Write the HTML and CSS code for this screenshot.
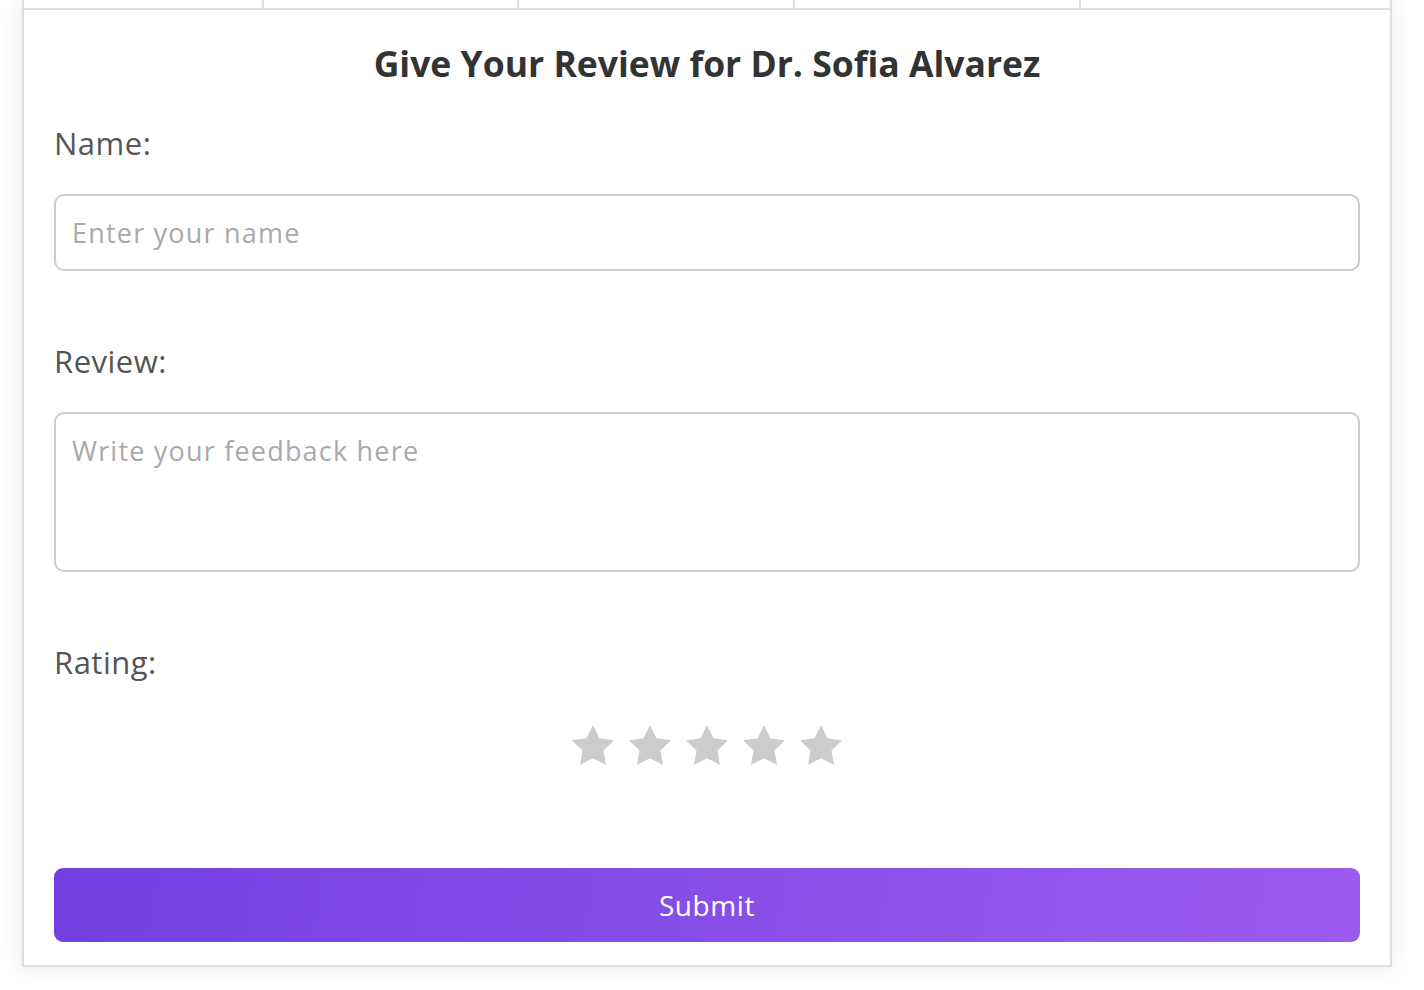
FILE: index.html
```html
<!DOCTYPE html>
<html lang="en">
<head>
<meta charset="utf-8">
<title>Review</title>
<link rel="stylesheet" href="styles.css">
</head>
<body>
<div class="card">
  <div class="table-strip">
    <div class="cell c1"></div>
    <div class="cell c2"></div>
    <div class="cell c3"></div>
    <div class="cell c4"></div>
    <div class="cell c5"></div>
  </div>
  <form class="review-form">
    <h2 class="title">Give Your Review for Dr. Sofia Alvarez</h2>
    <label class="label" for="name">Name:</label>
    <input class="field" id="name" type="text" placeholder="Enter your name">
    <label class="label label-gap" for="review">Review:</label>
    <textarea class="field area" id="review" placeholder="Write your feedback here"></textarea>
    <div class="label label-gap">Rating:</div>
    <div class="stars">
      <svg class="star" viewBox="2 2 20 19.02"><polygon points="12,2 15.09,8.26 22,9.27 17,14.14 18.18,21.02 12,17.77 5.82,21.02 7,14.14 2,9.27 8.91,8.26"/></svg>
      <svg class="star" viewBox="2 2 20 19.02"><polygon points="12,2 15.09,8.26 22,9.27 17,14.14 18.18,21.02 12,17.77 5.82,21.02 7,14.14 2,9.27 8.91,8.26"/></svg>
      <svg class="star" viewBox="2 2 20 19.02"><polygon points="12,2 15.09,8.26 22,9.27 17,14.14 18.18,21.02 12,17.77 5.82,21.02 7,14.14 2,9.27 8.91,8.26"/></svg>
      <svg class="star" viewBox="2 2 20 19.02"><polygon points="12,2 15.09,8.26 22,9.27 17,14.14 18.18,21.02 12,17.77 5.82,21.02 7,14.14 2,9.27 8.91,8.26"/></svg>
      <svg class="star" viewBox="2 2 20 19.02"><polygon points="12,2 15.09,8.26 22,9.27 17,14.14 18.18,21.02 12,17.77 5.82,21.02 7,14.14 2,9.27 8.91,8.26"/></svg>
    </div>
    <button class="submit" type="button">Submit</button>
  </form>
</div>
</body>
</html>
```
FILE: styles.css
```css
html, body {
  margin: 0;
  padding: 0;
  background: #ffffff;
}

body {
  font-family: "Open Sans", "Liberation Sans", sans-serif;
  overflow: hidden;
  height: 990px;
}

.card {
  box-sizing: border-box;
  margin-left: 22px;
  width: 1370px;
  border: 2px solid #dddddd;
  border-top: none;
  background: #ffffff;
  box-shadow: 0 0 22px rgba(0, 0, 0, 0.09);
}

.table-strip {
  display: flex;
  height: 8px;
  border-bottom: 2px solid #dddddd;
}

.cell {
  box-sizing: border-box;
  border-right: 2px solid #dddddd;
}

.c1 { width: 240px; }
.c2 { width: 255px; }
.c3 { width: 276px; }
.c4 { width: 286px; }
.c5 { flex: 1; border-right: none; }

.review-form {
  display: flex;
  flex-direction: column;
  padding: 31px 30px 23px 30px;
}

.title {
  margin: 0;
  text-align: center;
  font-size: 35.5px;
  line-height: 44px;
  font-weight: 700;
  color: #333333;
}

.label {
  display: block;
  margin-top: 38px;
  font-size: 31px;
  line-height: 40px;
  letter-spacing: 0.5px;
  color: #555555;
}

.label-gap {
  margin-top: 70px;
}

.field {
  box-sizing: border-box;
  margin-top: 31px;
  width: 100%;
  height: 77px;
  padding: 0 16px;
  border: 2px solid #cccccc;
  border-radius: 10px;
  font-family: "Open Sans", "Liberation Sans", sans-serif;
  font-size: 27px;
  letter-spacing: 1.2px;
  color: #333333;
  background: #ffffff;
  outline: none;
}

.field::placeholder {
  color: #a9a9a9;
  opacity: 1;
}

.area {
  height: 160px;
  padding: 21px 16px 11px;
  line-height: 32px;
  resize: none;
  display: block;
}

.stars {
  display: flex;
  justify-content: center;
  gap: 15px;
  margin-top: 43px;
}

.star {
  width: 42px;
  height: 40px;
  fill: #cccccc;
}

.submit {
  margin-top: 103px;
  height: 74px;
  width: 100%;
  border: none;
  border-radius: 9px;
  background: linear-gradient(100deg, #733fe1 0%, #8a4fe8 55%, #9c5bee 100%);
  color: #ffffff;
  font-family: "Open Sans", "Liberation Sans", sans-serif;
  font-size: 28px;
  line-height: 74px;
  letter-spacing: 0.6px;
  padding: 0;
  cursor: pointer;
}
```
